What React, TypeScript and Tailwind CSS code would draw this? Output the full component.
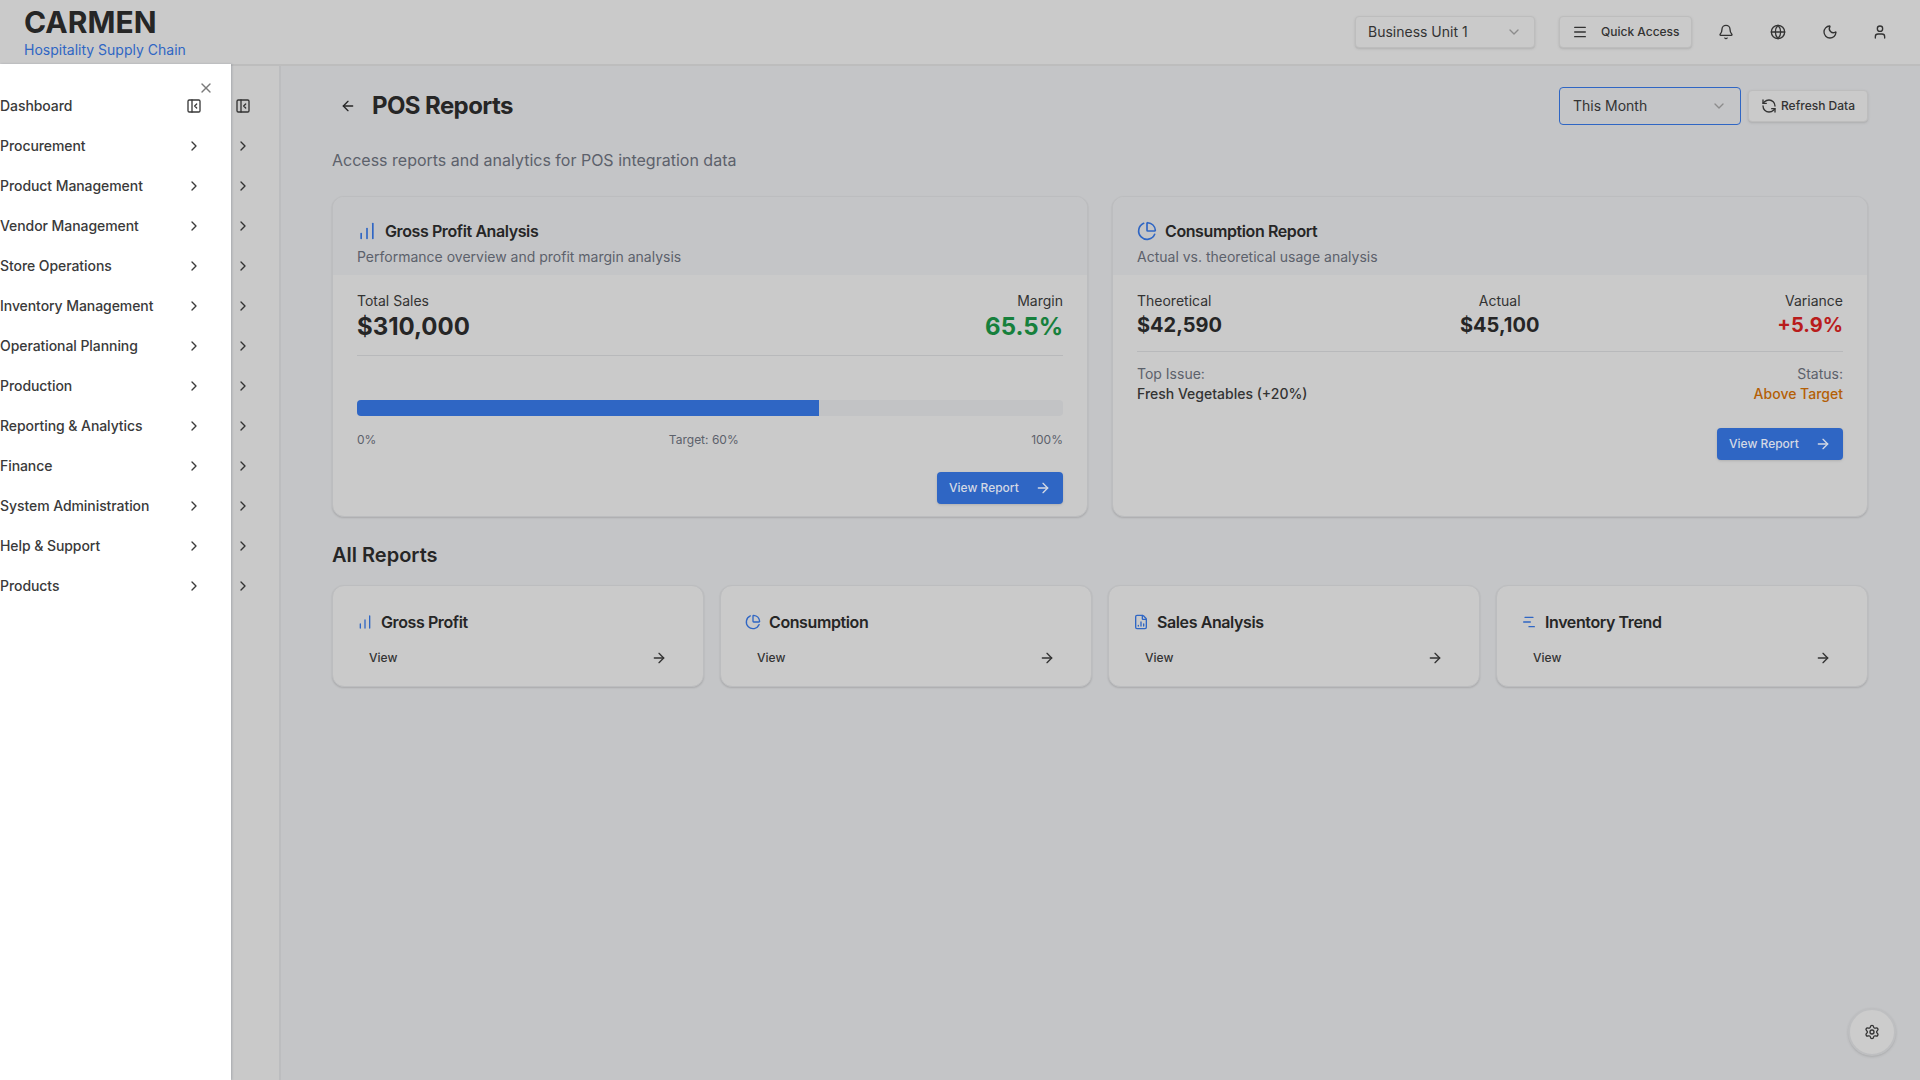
import React from 'react';
import {
  ArrowLeft,
  ArrowRight,
  Bell,
  ChartNoAxesColumnIncreasing,
  ChartNoAxesGantt,
  ChevronDown,
  ChevronRight,
  FileChartColumn,
  Globe,
  Menu,
  Moon,
  PanelLeftClose,
  PieChart,
  RefreshCcw,
  Settings,
  User,
  X,
} from 'lucide-react';

const menuItems = [
  'Procurement',
  'Product Management',
  'Vendor Management',
  'Store Operations',
  'Inventory Management',
  'Operational Planning',
  'Production',
  'Reporting & Analytics',
  'Finance',
  'System Administration',
  'Help & Support',
  'Products',
];

const reports = [
  { title: 'Gross Profit', Icon: ChartNoAxesColumnIncreasing },
  { title: 'Consumption', Icon: PieChart },
  { title: 'Sales Analysis', Icon: FileChartColumn },
  { title: 'Inventory Trend', Icon: ChartNoAxesGantt },
];

const ViewReportButton: React.FC = () => (
  <button className="flex h-8 w-[126px] items-center justify-between rounded bg-[#2f66c4] px-3 text-xs font-medium text-[#d4d9e4] shadow-sm">
    View Report
    <ArrowRight size={16} />
  </button>
);

const Header: React.FC = () => (
  <header className="flex h-[66px] shrink-0 items-center justify-between border-b-2 border-[#bdbdbd] bg-[#cacaca] pb-px pl-6 pr-6">
    <div className="flex flex-col">
      <div className="text-[30px] font-bold leading-[36px] text-[#262626]">CARMEN</div>
      <div className="text-sm leading-5 text-[#2f66c4]">Hospitality Supply Chain</div>
    </div>
    <div className="flex items-center">
      <div className="flex h-8 w-[180px] items-center justify-between rounded border border-[#bdbdbd] bg-[#cacaca] px-3 text-sm text-[#333333] shadow-sm">
        Business Unit 1
        <ChevronDown size={16} className="text-[#8c8c8c]" />
      </div>
      <button className="ml-6 flex h-8 w-[133px] items-center rounded border border-[#bdbdbd] bg-[#cacaca] pl-3 text-xs font-medium text-[#333333] shadow-sm">
        <Menu size={16} />
        <span className="ml-[13px]">Quick Access</span>
      </button>
      <div className="ml-4 flex items-center gap-4 text-[#333333]">
        <span className="flex h-9 w-9 items-center justify-center"><Bell size={16} /></span>
        <span className="flex h-9 w-9 items-center justify-center"><Globe size={16} /></span>
        <span className="flex h-9 w-9 items-center justify-center"><Moon size={16} /></span>
        <span className="flex h-9 w-[32px] items-center justify-center"><User size={16} /></span>
      </div>
    </div>
  </header>
);

const Drawer: React.FC = () => (
  <div className="absolute bottom-0 left-0 top-16 w-[231px] bg-white pt-[22px] text-[#3a3a3a] shadow-[1px_0_2px_rgba(60,70,90,0.25)]">
    <X size={16} className="absolute left-[198px] top-4 text-[#7a7a7a]" />
    <div className="flex h-10 w-[202px] items-center justify-between text-sm font-medium tracking-[-0.005em]">
      Dashboard
      <PanelLeftClose size={16} />
    </div>
    {menuItems.map((item) => (
      <div key={item} className="flex h-10 w-[202px] items-center justify-between text-sm font-medium tracking-[-0.005em]">
        {item}
        <ChevronRight size={16} />
      </div>
    ))}
  </div>
);

const Sidebar: React.FC = () => (
  <aside className="w-[281px] shrink-0 border-r-2 border-[#bcbdbf] bg-[#c9c9c9] pr-[28px] pt-5 text-[#333333]">
    <div className="flex h-10 items-center justify-end">
      <PanelLeftClose size={16} />
    </div>
    {menuItems.map((item) => (
      <div key={item} className="flex h-10 items-center justify-end">
        <ChevronRight size={16} />
      </div>
    ))}
  </aside>
);

const Stat: React.FC<{ label: string; value: string; align?: string; valueClass: string }> = ({
  label,
  value,
  align = 'items-start',
  valueClass,
}) => (
  <div className={`flex flex-col ${align}`}>
    <span className="text-sm leading-5 text-[#333333]">{label}</span>
    <span className={valueClass}>{value}</span>
  </div>
);

const GrossProfitCard: React.FC = () => (
  <div className="overflow-hidden rounded-xl border border-[#bcbdbf] bg-[#cacaca] shadow-[0_1px_2px_rgba(0,0,0,0.14)]">
    <div className="h-[78px] bg-[#c4c5c7] px-6 pt-[25px]">
      <div className="flex h-[18px] items-center gap-2 text-base font-semibold tracking-tight text-[#262626]">
        <ChartNoAxesColumnIncreasing size={20} className="text-[#2f66c4]" />
        Gross Profit Analysis
      </div>
      <p className="mt-[7px] text-sm leading-5 text-[#5c616b]">Performance overview and profit margin analysis</p>
    </div>
    <div className="px-6 pt-4">
      <div className="flex justify-between border-b border-[#b8b9bb] pb-3">
        <Stat label="Total Sales" value="$310,000" valueClass="text-2xl font-bold leading-8 text-[#262626]" />
        <Stat
          label="Margin"
          value="65.5%"
          align="items-end"
          valueClass="text-2xl font-bold leading-8 text-[#16803c]"
        />
      </div>
      <div className="mt-11 h-4 overflow-hidden rounded-sm bg-[#c2c3c5]">
        <div className="h-full w-[65.5%] bg-[#2f66c4]" />
      </div>
      <div className="mt-4 flex justify-between text-xs leading-4 text-[#5c616b]">
        <span>0%</span>
        <span>Target: 60%</span>
        <span>100%</span>
      </div>
      <div className="mt-6 flex justify-end pb-3">
        <ViewReportButton />
      </div>
    </div>
  </div>
);

const ConsumptionCard: React.FC = () => (
  <div className="overflow-hidden rounded-xl border border-[#bcbdbf] bg-[#cacaca] shadow-[0_1px_2px_rgba(0,0,0,0.14)]">
    <div className="h-[78px] bg-[#c4c5c7] px-6 pt-[25px]">
      <div className="flex h-[18px] items-center gap-2 text-base font-semibold tracking-tight text-[#262626]">
        <PieChart size={20} className="text-[#2f66c4]" />
        Consumption Report
      </div>
      <p className="mt-[7px] text-sm leading-5 text-[#5c616b]">Actual vs. theoretical usage analysis</p>
    </div>
    <div className="px-6 pt-4">
      <div className="flex justify-between border-b border-[#b8b9bb] pb-3">
        <Stat label="Theoretical" value="$42,590" valueClass="text-xl font-bold leading-7 text-[#262626]" />
        <Stat
          label="Actual"
          value="$45,100"
          align="items-center"
          valueClass="text-xl font-bold leading-7 text-[#262626]"
        />
        <Stat label="Variance" value="+5.9%" align="items-end" valueClass="text-xl font-bold leading-7 text-[#b91c1c]" />
      </div>
      <div className="mt-3 flex justify-between text-sm leading-5">
        <div>
          <div className="text-[#5c616b]">Top Issue:</div>
          <div className="font-medium text-[#333333]">Fresh Vegetables (+20%)</div>
        </div>
        <div className="text-right">
          <div className="text-[#5c616b]">Status:</div>
          <div className="font-medium text-[#b45f06]">Above Target</div>
        </div>
      </div>
      <div className="mt-6 flex justify-end">
        <ViewReportButton />
      </div>
    </div>
  </div>
);

const App: React.FC = () => {
  return (
    <div className="relative flex h-[1080px] w-[1920px] flex-col overflow-hidden bg-[#c4c5c7] font-['Inter',sans-serif]">
      <Header />
      <div className="flex flex-1">
        <Sidebar />
        <main className="flex-1 pl-[51px] pr-[52px] pt-[21px]">
          <div className="flex h-[38px] items-center justify-between">
            <div className="flex items-center text-[#262626]">
              <ArrowLeft size={16} className="ml-2" />
              <h1 className="ml-4 text-2xl font-bold tracking-tight">POS Reports</h1>
            </div>
            <div className="flex items-center gap-[7px]">
              <div className="flex h-[38px] w-[182px] items-center justify-between rounded border border-[#2f66c4] px-[13px] text-sm text-[#333333]">
                This Month
                <ChevronDown size={16} className="text-[#8c8c8c]" />
              </div>
              <button className="flex h-8 w-[120px] items-center justify-center gap-1 rounded border border-[#bdbdbd] bg-[#cacaca] text-xs font-medium text-[#333333] shadow-sm">
                <RefreshCcw size={16} />
                Refresh Data
              </button>
            </div>
          </div>
          <p className="mt-[23px] text-base leading-6 text-[#5c616b]">Access reports and analytics for POS integration data</p>
          <div className="mt-6 grid grid-cols-2 gap-6">
            <GrossProfitCard />
            <ConsumptionCard />
          </div>
          <h2 className="mt-6 text-xl font-semibold leading-7 text-[#262626]">All Reports</h2>
          <div className="mt-4 grid grid-cols-4 gap-4">
            {reports.map(({ title, Icon }) => (
              <div key={title} className="h-[102px] rounded-xl border border-[#bcbdbf] bg-[#cacaca] px-6 pt-6 shadow-[0_1px_2px_rgba(0,0,0,0.14)]">
                <div className="flex h-6 items-center gap-2 text-base font-semibold tracking-tight text-[#262626]">
                  <Icon size={16} className="text-[#2f66c4]" />
                  {title}
                </div>
                <div className="mt-2 flex h-8 items-center justify-between px-3 text-xs font-medium text-[#333333]">
                  View
                  <ArrowRight size={16} />
                </div>
              </div>
            ))}
          </div>
        </main>
      </div>
      <Drawer />
      <button className="absolute bottom-6 right-6 flex h-12 w-12 items-center justify-center rounded-full border-2 border-[#bebfc1] bg-[#cccccc] text-[#333333] shadow-sm">
        <Settings size={16} />
      </button>
    </div>
  );
};

export default App;
